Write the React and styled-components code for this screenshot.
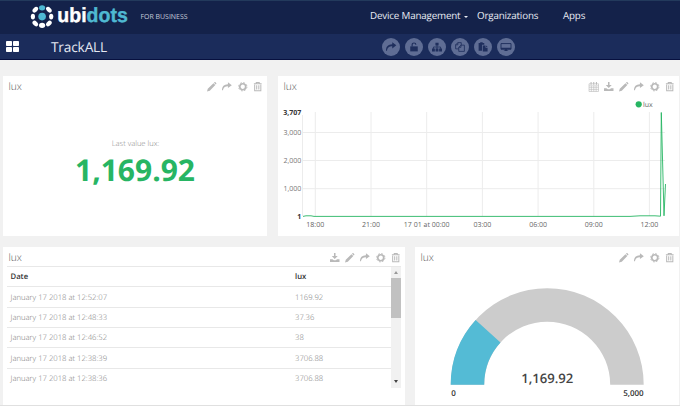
import styled, { createGlobalStyle } from "styled-components"

const GlobalStyle = createGlobalStyle`
	* {
		box-sizing: border-box;
	}
	body {
		margin: 0;
		background: #f1f1f1;
		font-family: "Open Sans", "Noto Sans", sans-serif;
		text-rendering: geometricPrecision;
		overflow: hidden;
	}
`

const Page = styled.div`
	width: 680px;
	height: 406px;
	overflow: hidden;
	display: flex;
	flex-direction: column;
	border-bottom: 1px solid #e0e0e0;
`

const TopBar = styled.header`
	flex: 0 0 34px;
	display: flex;
	align-items: center;
	padding: 0 0 3px 30px;
	background: #14224a;
	border-top: 1px solid #233a5c;
	color: #e9ecf4;
`

const Tagline = styled.span`
	width: 240px;
	padding: 3px 0 0 10.5px;
	font-size: 6.95px;
	color: #c5cad8;
`

const NavLink = styled.a`
	display: flex;
	align-items: center;
	width: ${(p) => p.$width}px;
	font-size: 9.8px;
	letter-spacing: -0.17px;
	line-height: 14px;
	white-space: nowrap;
`

const Caret = styled.i`
	margin: 1px 0 0 3.5px;
	border: 2.3px solid transparent;
	border-top-color: currentColor;
	border-bottom: 0;
`

const SubBar = styled.div`
	flex: 0 0 26px;
	display: flex;
	align-items: center;
	padding-left: 6px;
	background: #1b2c5b;
	border-bottom: 1px solid #07103f;
`

const Title = styled.h1`
	width: 331px;
	margin: 0 0 0 32px;
	padding-top: 2px;
	font-size: 13.7px;
	letter-spacing: -0.17px;
	line-height: 20px;
	font-weight: 400;
	color: #e4e8f2;
`

const Actions = styled.div`
	display: flex;
	gap: 5px;
`

const RoundButton = styled.button`
	display: flex;
	align-items: center;
	justify-content: center;
	width: 18px;
	height: 18px;
	padding: 0;
	border: 0;
	border-radius: 50%;
	background: #5f6d94;
	color: #1f2f5d;
`

const Board = styled.main`
	display: flex;
	flex-direction: column;
	gap: 11px;
	padding: 16px 1px 0 3px;
`

const Row = styled.div`
	display: grid;
	grid-template-columns: ${(p) => p.$columns};
	column-gap: ${(p) => p.$gap}px;
`

const Card = styled.section`
	display: flex;
	flex-direction: column;
	height: 160px;
	background: #fff;
	overflow: hidden;
`

const CardHead = styled.div`
	flex: 0 0 19px;
	display: flex;
	align-items: center;
	justify-content: space-between;
	padding: 2px 4.5px 0 5.5px;
	font-size: 10.2px;
	line-height: 13px;
	font-weight: 300;
	color: #555;
`

const Tools = styled.div`
	display: flex;
	gap: 5.8px;
	color: #b9b9b9;
`

const Metric = styled.div`
	flex: 1;
	display: flex;
	flex-direction: column;
	align-items: center;
	padding-top: 42px;
`

const MetricLabel = styled.span`
	font-size: 7.6px;
	line-height: 14px;
	font-weight: 300;
	color: #888;
	padding-left: 1px;
`

const MetricValue = styled.strong`
	font-size: 30px;
	line-height: 38px;
	font-weight: 700;
	color: #27b563;
`

const TableArea = styled.div`
	display: flex;
	height: 122px;
	margin: 0 4px;
	border-top: 1px solid #e8e8e8;
	overflow: hidden;
`

const Table = styled.div`
	flex: 1;
`

const TableRow = styled.div`
	display: grid;
	grid-template-columns: 284.5px 1fr;
	align-items: center;
	height: 20.35px;
	padding: 1.5px 0 0 3.5px;
	border-bottom: 1px solid ${(p) => (p.$last ? "transparent" : "#e8e8e8")};
	font-size: 7.7px;
	font-weight: ${(p) => (p.$head ? 600 : 300)};
	color: ${(p) => (p.$head ? "#333" : "#777")};
`

const Scrollbar = styled.div`
	width: 10px;
	display: flex;
	flex-direction: column;
	align-items: center;
	justify-content: space-between;
	background: #f1f1f1;
`

const ScrollTop = styled.div`
	width: 10px;
	display: flex;
	flex-direction: column;
	align-items: center;
	gap: 4px;
	padding-top: 4px;
`

const Thumb = styled.div`
	width: 10px;
	height: 40px;
	background: #c1c1c1;
`

const Arrow = styled.i`
	border: 2.5px solid transparent;
	${(p) => (p.$up ? "border-top: 0; border-bottom: 3px solid #999;" : "border-bottom: 0; border-top: 3px solid #444; margin-bottom: 5px;")}
`

const Drawing = styled.svg`
	display: block;
	flex: none;
	font-family: "Open Sans", "Noto Sans", sans-serif;
`

const icons = {
	calendar: (
		<g fill='none' stroke='currentColor' strokeWidth='1'>
			<path d='M0 3h16v13H0zM0 6.500h16M0 9.600h16M0 12.800h16M4 6v10M8 6v10M12 6v10' />
			<path d='M3.500 0v4.500M8 0v4.500M12.500 0v4.500' strokeWidth='1.700' />
		</g>
	),
	download: <path d='M6.700 0h2.600v5H13L8 10 3 5h3.700zM0 10.500h4l2.500 1.700h3l2.500-1.700h4V15H0z' fill='currentColor' />,
	pencil: <path d='M0 16l1.300-4.800L10.900 2 14 5.100 4.700 14.700zM11.700 1.200l1-.9c.6-.4 1.100-.2 1.600.3l1.100 1.100c.5.500.6 1.100.2 1.600l-.8 1z' fill='currentColor' />,
	share: <path d='M10 .3L16.500 5.300l-6.500 5V7C6 6.900 3 8 1.500 13.800H0C0 7 3.500 3.800 10 3.600z' fill='currentColor' />,
	cog: (
		<g fill='none' stroke='currentColor'>
			<circle cx='8' cy='8' r='5' strokeWidth='2.800' />
			<circle cx='8' cy='8' r='7' strokeWidth='1.600' strokeDasharray='2.900 2.598' />
		</g>
	),
	trash: (
		<g fill='none' stroke='currentColor' strokeWidth='1.700'>
			<path d='M1.500 3h13M5.500 3V1h5v2' />
			<path d='M2.800 4v10.700h10.400V4M6.200 5.500v7M9.800 5.500v7' />
		</g>
	),
	lock: (
		<g>
			<path d='M2 7h12v8H2z' fill='currentColor' />
			<path d='M5 7V4.500a3 3 0 0 1 6 0' fill='none' stroke='currentColor' strokeWidth='1.800' />
		</g>
	),
	sitemap: (
		<g fill='currentColor'>
			<path d='M5.500 1h5v4.500h-5zM0 10.500h4.600V15H0zM5.700 10.500h4.600V15H5.700zM11.400 10.500H16V15h-4.600z' />
			<path d='M2.300 11V8h11.400v3M8 5v6' fill='none' stroke='currentColor' strokeWidth='1.300' />
		</g>
	),
	copy: (
		<g fill='none' stroke='currentColor' strokeWidth='1.300'>
			<path d='M6 11H1V4.500L4.500 1H10v4M4.500 1v3.500H1' />
			<path d='M6 8.500L9.500 5H15v10H6zM9.500 5v3.500H6' />
		</g>
	),
	paste: (
		<g fill='currentColor'>
			<path d='M1 1.500h2.500V.5h4v1H10v3H6.500V14H1z' />
			<path d='M7.700 5.700H12V9h3.300v6.300H7.700zM13 5.500L15.500 8H13z' />
		</g>
	),
	desktop: (
		<g>
			<path d='M0 2.500h16v9H0z' fill='none' stroke='currentColor' strokeWidth='1.500' />
			<path d='M0 9h16v2.500H0zM6.500 11h3l.5 2.500h1.500v1h-7v-1H6z' fill='currentColor' />
		</g>
	),
}

function Icon({ name, size = 9.5 }) {
	return (
		<Drawing width={size} height={size} viewBox='0 0 16 16' overflow='visible'>
			{icons[name]}
		</Drawing>
	)
}

function Logo() {
	return (
		<Drawing width={100} height={28} viewBox='30 2 100 28'>
			<g fill='#fff'>
				<ellipse cx='35.300' cy='9.700' rx='3.300' ry='2.200' transform='rotate(-45 35.300 9.700)' />
				<ellipse cx='48.900' cy='9.700' rx='3.300' ry='2.200' transform='rotate(45 48.900 9.700)' />
				<ellipse cx='32.900' cy='16.600' rx='2.100' ry='2.900' />
				<ellipse cx='51.200' cy='16.600' rx='2.100' ry='2.900' />
				<ellipse cx='35.300' cy='23.500' rx='3.300' ry='2.200' transform='rotate(45 35.300 23.500)' />
				<ellipse cx='48.900' cy='23.500' rx='3.300' ry='2.200' transform='rotate(-45 48.900 23.500)' />
				<ellipse cx='42.100' cy='25.300' rx='3.100' ry='2.600' />
			</g>
			<ellipse cx='42.100' cy='7.800' rx='3.100' ry='2.600' fill='#4fb9d2' />
			<circle cx='42.100' cy='16.600' r='3.800' fill='#4fb9d2' />
			<text
				x='57.300'
				y='22.300'
				fontFamily='Liberation Sans, sans-serif'
				fontWeight='700'
				fontSize='20.300'
				fill='#fff'
				stroke='#fff'
				strokeWidth='.4'
				strokeLinejoin='round'
				textLength='70.500'
				lengthAdjust='spacingAndGlyphs'>
				ubi
				<tspan fill='#4fb9d2' stroke='#4fb9d2'>
					dots
				</tspan>
			</text>
		</Drawing>
	)
}

function Widget({ tools, children }) {
	return (
		<Card>
			<CardHead>
				lux
				<Tools>
					{tools.map((name) => (
						<Icon key={name} name={name} />
					))}
				</Tools>
			</CardHead>
			{children}
		</Card>
	)
}

const baseTools = ["pencil", "share", "cog", "trash"]

const hours = [
	[315.3, "18:00"],
	[371, "21:00"],
	[426.7, "17 01 at 00:00"],
	[482.4, "03:00"],
	[538.1, "06:00"],
	[593.8, "09:00"],
	[649.4, "12:00"],
]

const levels = [
	[112.5, "3,707", true],
	[132.5, "3,000"],
	[160.5, "2,000"],
	[188.7, "1,000"],
	[216.5, "1", true],
]

function LineChart() {
	return (
		<Drawing width={401} height={141} viewBox='278 95 401 141' fontSize='7' fill='#666'>
			<g stroke='#ececec' strokeWidth='1'>
				{hours.map(([x]) => (
					<line key={x} x1={x} x2={x} y1='112' y2='216' />
				))}
				{levels.slice(1, 4).map(([y]) => (
					<line key={y} x1='303' x2='665' y1={y} y2={y} />
				))}
				<line x1='302.500' x2='302.500' y1='115' y2='216' />
			</g>
			{levels.map(([y, label, bold]) => (
				<text key={label} x='301.300' y={y + 2.6} textAnchor='end' fontWeight={bold ? 700 : 400} fill={bold ? "#333" : "#777"}>
					{label}
				</text>
			))}
			{hours.map(([x, label]) => (
				<text key={label} x={x} y='227.300' textAnchor='middle'>
					{label}
				</text>
			))}
			<path d='M303 216.400L306 215.800H311L314 216.400H630L640 215.800H655L660.500 216.200L661.300 112.500L664 215.800L665.500 184' fill='none' stroke='#27b563' strokeWidth='.9' />
			<circle cx='638.700' cy='104.300' r='3.100' fill='#27b563' />
			<text x='643' y='107'>
				lux
			</text>
		</Drawing>
	)
}

const readings = [
	["January 17 2018 at 12:52:07", "1169.92"],
	["January 17 2018 at 12:48:33", "37.36"],
	["January 17 2018 at 12:46:52", "38"],
	["January 17 2018 at 12:38:39", "3706.88"],
	["January 17 2018 at 12:38:36", "3706.88"],
]

function ReadingsTable() {
	return (
		<TableArea>
			<Table>
				<TableRow $head>
					<span>Date</span>
					<span>lux</span>
				</TableRow>
				{readings.map(([date, value], i) => (
					<TableRow key={date} $last={i === readings.length - 1}>
						<span>{date}</span>
						<span>{value}</span>
					</TableRow>
				))}
			</Table>
			<Scrollbar>
				<ScrollTop>
					<Arrow $up />
					<Thumb />
				</ScrollTop>
				<Arrow />
			</Scrollbar>
		</TableArea>
	)
}

function Gauge({ value, max }) {
	const cx = 547.2
	const cy = 384.7
	const outer = 96.5
	const inner = 63
	const angle = (value / max) * Math.PI
	const at = (r) => `${cx - r * Math.cos(angle)} ${cy - r * Math.sin(angle)}`
	return (
		<Drawing width={264} height={139} viewBox='415 266 264 139' fill='#333' fontWeight='600'>
			<path d={`M${cx - outer} ${cy}A${outer} ${outer} 0 0 1 ${cx + outer} ${cy}H${cx + inner}A${inner} ${inner} 0 0 0 ${cx - inner} ${cy}Z`} fill='#ccc' />
			<path d={`M${cx - outer} ${cy}A${outer} ${outer} 0 0 1 ${at(outer)}L${at(inner)}A${inner} ${inner} 0 0 0 ${cx - inner} ${cy}Z`} fill='#54bbd5' />
			<text x='547.300' y='382.500' fontSize='13.100' textAnchor='middle' fill='#444'>
				{value.toLocaleString("en-US")}
			</text>
			<text x='451.200' y='395.500' fontSize='8'>
				0
			</text>
			<text x='643.700' y='395.500' fontSize='8' textAnchor='end'>
				{max.toLocaleString("en-US")}
			</text>
		</Drawing>
	)
}

export default function App() {
	return (
		<Page>
			<GlobalStyle />
			<TopBar>
				<Logo />
				<Tagline>FOR BUSINESS</Tagline>
				<NavLink $width={107}>
					Device Management
					<Caret />
				</NavLink>
				<NavLink $width={86}>Organizations</NavLink>
				<NavLink $width={40}>Apps</NavLink>
			</TopBar>
			<SubBar>
				<Drawing width={13} height={11} viewBox='0 0 13 11' fill='#fff'>
					<rect width='6' height='5' rx='.8' />
					<rect x='7' width='6' height='5' rx='.8' />
					<rect y='6' width='6' height='5' rx='.8' />
					<rect x='7' y='6' width='6' height='5' rx='.8' />
				</Drawing>
				<Title>TrackALL</Title>
				<Actions>
					{["share", "lock", "sitemap", "copy", "paste", "desktop"].map((name) => (
						<RoundButton key={name}>
							<Icon name={name} size={10} />
						</RoundButton>
					))}
				</Actions>
			</SubBar>
			<Board>
				<Row $columns='264px 401px' $gap={11}>
					<Widget tools={baseTools}>
						<Metric>
							<MetricLabel>Last value lux:</MetricLabel>
							<MetricValue>1,169.92</MetricValue>
						</Metric>
					</Widget>
					<Widget tools={["calendar", "download", ...baseTools]}>
						<LineChart />
					</Widget>
				</Row>
				<Row $columns='402px 264px' $gap={10}>
					<Widget tools={["download", ...baseTools]}>
						<ReadingsTable />
					</Widget>
					<Widget tools={baseTools}>
						<Gauge value={1169.92} max={5000} />
					</Widget>
				</Row>
			</Board>
		</Page>
	)
}
